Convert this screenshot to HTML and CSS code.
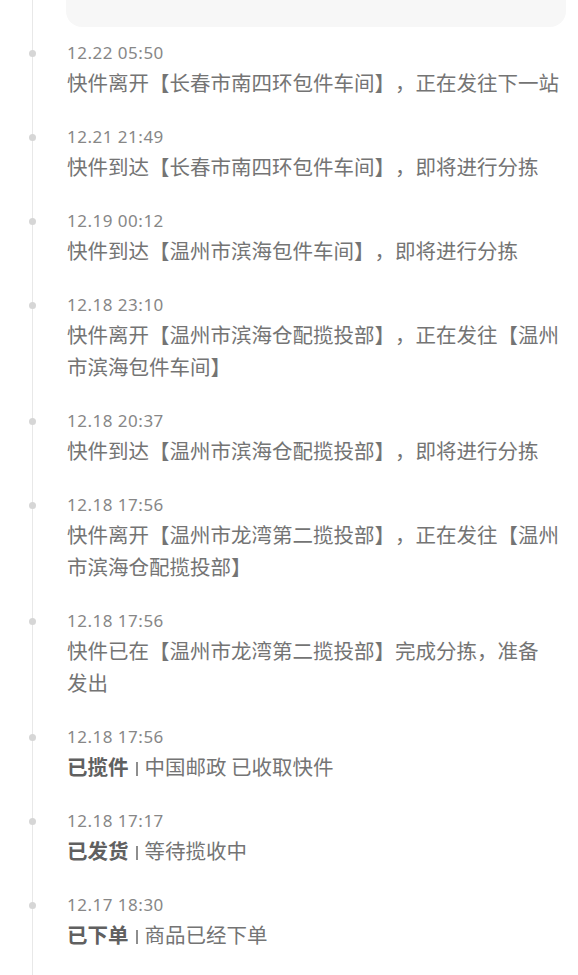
FILE: index.html
```html
<!DOCTYPE html>
<html lang="zh-CN">
<head>
  <meta charset="UTF-8" />
  <meta name="viewport" content="width=device-width, initial-scale=1.0"/>
  <title>物流详情</title>
  <link rel="stylesheet" href="styles.css">
</head>
<body>
  <div class="timeline">
    <div class="summary-card"></div>

    <div class="step">
      <div class="time">12.22 05:50</div>
      <div class="desc">快件离开【长春市南四环包件车间】，正在发往下一站</div>
    </div>
    <div class="step">
      <div class="time">12.21 21:49</div>
      <div class="desc">快件到达【长春市南四环包件车间】，即将进行分拣</div>
    </div>
    <div class="step">
      <div class="time">12.19 00:12</div>
      <div class="desc">快件到达【温州市滨海包件车间】，即将进行分拣</div>
    </div>
    <div class="step">
      <div class="time">12.18 23:10</div>
      <div class="desc">快件离开【温州市滨海仓配揽投部】，正在发往【温州市滨海包件车间】</div>
    </div>
    <div class="step">
      <div class="time">12.18 20:37</div>
      <div class="desc">快件到达【温州市滨海仓配揽投部】，即将进行分拣</div>
    </div>
    <div class="step">
      <div class="time">12.18 17:56</div>
      <div class="desc">快件离开【温州市龙湾第二揽投部】，正在发往【温州市滨海仓配揽投部】</div>
    </div>
    <div class="step">
      <div class="time">12.18 17:56</div>
      <div class="desc">快件已在【温州市龙湾第二揽投部】完成分拣，准备<br>发出</div>
    </div>
    <div class="step">
      <div class="time">12.18 17:56</div>
      <div class="desc"><b class="status">已揽件</b><span class="sep"></span>中国邮政 已收取快件</div>
    </div>
    <div class="step">
      <div class="time">12.18 17:17</div>
      <div class="desc"><b class="status">已发货</b><span class="sep"></span>等待揽收中</div>
    </div>
    <div class="step">
      <div class="time">12.17 18:30</div>
      <div class="desc"><b class="status">已下单</b><span class="sep"></span>商品已经下单</div>
    </div>
  </div>
</body>
</html>
```

FILE: styles.css
```css
body {
  margin: 0;
  background: #ffffff;
  font-family: "Noto Sans CJK SC", "Noto Sans", sans-serif;
}

.timeline {
  margin-left: 32px;
  border-left: 1px solid #e8e8e8;
  padding: 0 8px 20px 34px;
  min-height: 975px;
  box-sizing: border-box;
}

.summary-card {
  height: 60px;
  margin: -33px 4px 13px -1px;
  background: #f7f7f7;
  border-radius: 16px;
}

.step {
  position: relative;
  padding-bottom: 26px;
}

.step::before {
  content: "";
  position: absolute;
  left: -38px;
  top: 10px;
  width: 7px;
  height: 7px;
  border-radius: 50%;
  background: #d6d6d6;
}

.time {
  font-family: "Noto Sans", "Liberation Sans", sans-serif;
  font-size: 17px;
  line-height: 26px;
  letter-spacing: 0.5px;
  color: #878787;
}

.desc {
  font-size: 20.5px;
  line-height: 32px;
  color: #747474;
  text-spacing-trim: space-all;
}

.status {
  font-weight: 700;
  color: #606060;
}

.sep {
  display: inline-block;
  width: 2px;
  height: 14px;
  margin: 0 7px 0 7px;
  background: #8e8e8e;
  vertical-align: -1px;
}
```
